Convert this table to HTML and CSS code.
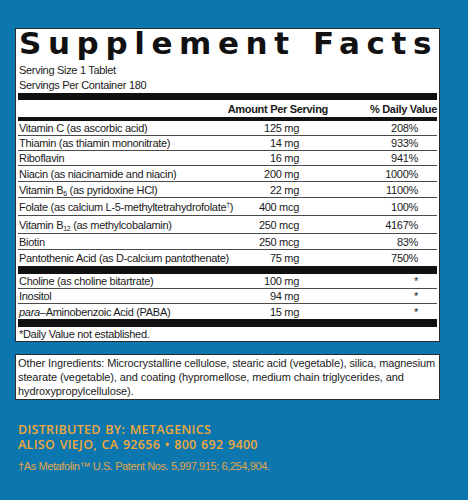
FILE: index.html
```html
<!DOCTYPE html>
<html lang="en">
<head>
    <meta charset="UTF-8">
    <meta name="viewport" content="width=device-width, initial-scale=1.0">
    <title>Supplement Facts</title>
    <link rel="stylesheet" href="styles.css">
</head>
<body>
    <div class="label">
        <div class="facts">
            <h1 class="title">Supplement Facts</h1>
            <div class="serving">Serving Size 1 Tablet</div>
            <div class="serving">Servings Per Container 180</div>
            <div class="bar thick"></div>
            <div class="head">
                <span>Amount Per Serving</span>
                <span>% Daily Value</span>
            </div>
            <div class="bar thin"></div>
            <div class="row short"><span class="name">Vitamin C (as ascorbic acid)</span><span class="amt">125 mg</span><span class="dv">208%</span></div>
            <div class="row short"><span class="name">Thiamin (as thiamin mononitrate)</span><span class="amt">14 mg</span><span class="dv">933%</span></div>
            <div class="row short"><span class="name">Riboflavin</span><span class="amt">16 mg</span><span class="dv">941%</span></div>
            <div class="row"><span class="name">Niacin (as niacinamide and niacin)</span><span class="amt">200 mg</span><span class="dv">1000%</span></div>
            <div class="row"><span class="name">Vitamin B<sub>6</sub> (as pyridoxine HCl)</span><span class="amt">22 mg</span><span class="dv">1100%</span></div>
            <div class="row tall"><span class="name">Folate (as calcium L-5-methyltetrahydrofolate<sup>†</sup>)</span><span class="amt">400 mcg</span><span class="dv">100%</span></div>
            <div class="row tall"><span class="name">Vitamin B<sub>12</sub> (as methylcobalamin)</span><span class="amt">250 mcg</span><span class="dv">4167%</span></div>
            <div class="row"><span class="name">Biotin</span><span class="amt">250 mcg</span><span class="dv">83%</span></div>
            <div class="row last"><span class="name">Pantothenic Acid (as D-calcium pantothenate)</span><span class="amt">75 mg</span><span class="dv">750%</span></div>
            <div class="bar block"></div>
            <div class="row short"><span class="name">Choline (as choline bitartrate)</span><span class="amt">100 mg</span><span class="dv">*</span></div>
            <div class="row short"><span class="name">Inositol</span><span class="amt">94 mg</span><span class="dv">*</span></div>
            <div class="row short last"><span class="name"><i>para</i>–Aminobenzoic Acid (PABA)</span><span class="amt">15 mg</span><span class="dv">*</span></div>
            <div class="bar block"></div>
            <div class="footnote">*Daily Value not established.</div>
        </div>

        <div class="ingredients">
            Other Ingredients: Microcrystalline cellulose, stearic acid (vegetable), silica, magnesium
            stearate (vegetable), and coating (hypromellose, medium chain triglycerides, and
            hydroxypropylcellulose).
        </div>

        <div class="distrib">
            <div>DISTRIBUTED BY: METAGENICS</div>
            <div>ALISO VIEJO, CA 92656 • 800 692 9400</div>
        </div>
        <p class="note">†As Metafolin™ U.S. Patent Nos. 5,997,915; 6,254,904.</p>
    </div>
</body>
</html>
```

FILE: styles.css
```css
body {
    margin: 0;
    background-color: #0b77ae;
    font-family: "Liberation Sans", Arial, sans-serif;
    color: #1a1a1a;
}
.label {
    padding: 28px 0 0 15px;
    width: 425px;
}
.facts {
    background: #fff;
    border: 1px solid #2b2b2b;
    padding: 0 2px;
    font-size: 11px;
    letter-spacing: -0.3px;
}
.title {
    margin: 0 0 6px 1px;
    font-family: "DejaVu Sans", sans-serif;
    font-weight: 900;
    font-size: 31px;
    line-height: 28px;
    letter-spacing: 6.6px;
    color: #111;
    white-space: nowrap;
}
.serving {
    padding-left: 1px;
    line-height: 15px;
}
.bar {
    background: #111;
}
.bar.thick {
    height: 7px;
}
.bar.thin {
    height: 4px;
}
.bar.block {
    height: 8px;
}
.head {
    display: flex;
    justify-content: flex-end;
    gap: 42px;
    height: 17px;
    padding-top: 2px;
    box-sizing: border-box;
    font-weight: bold;
    line-height: 15px;
}
.row {
    display: grid;
    grid-template-columns: 1fr 58px 119px 19px;
    align-items: center;
    height: 16px;
    box-sizing: border-box;
    border-bottom: 1px solid #4a4a4a;
    line-height: 14px;
    white-space: nowrap;
}
.row.short {
    height: 15px;
}
.row.tall {
    height: 18px;
}
.row.last {
    border-bottom: none;
}
.row::after {
    content: "";
}
.name {
    padding-left: 1px;
}
.amt,
.dv {
    text-align: right;
}
sub {
    font-size: 7px;
    line-height: 0;
    vertical-align: -2px;
}
sup {
    font-size: 7px;
    line-height: 0;
    vertical-align: 4px;
}
.footnote {
    padding-left: 1px;
    line-height: 14px;
}
.ingredients {
    margin-top: 12px;
    background: #fff;
    border: 1px solid #2b2b2b;
    padding: 1px 2px;
    font-size: 11px;
    line-height: 14px;
    letter-spacing: -0.1px;
    color: #222;
}
.distrib {
    margin-top: 22px;
    padding-left: 3px;
    font-family: "Open Sans", sans-serif;
    font-weight: 600;
    font-size: 12.5px;
    line-height: 15px;
    letter-spacing: 0.3px;
    word-spacing: 1px;
    color: #f0a83a;
}
.note {
    margin: 7px 0 0;
    padding-left: 3px;
    font-size: 11px;
    line-height: 14px;
    letter-spacing: -0.4px;
    color: #e2a548;
}
```
